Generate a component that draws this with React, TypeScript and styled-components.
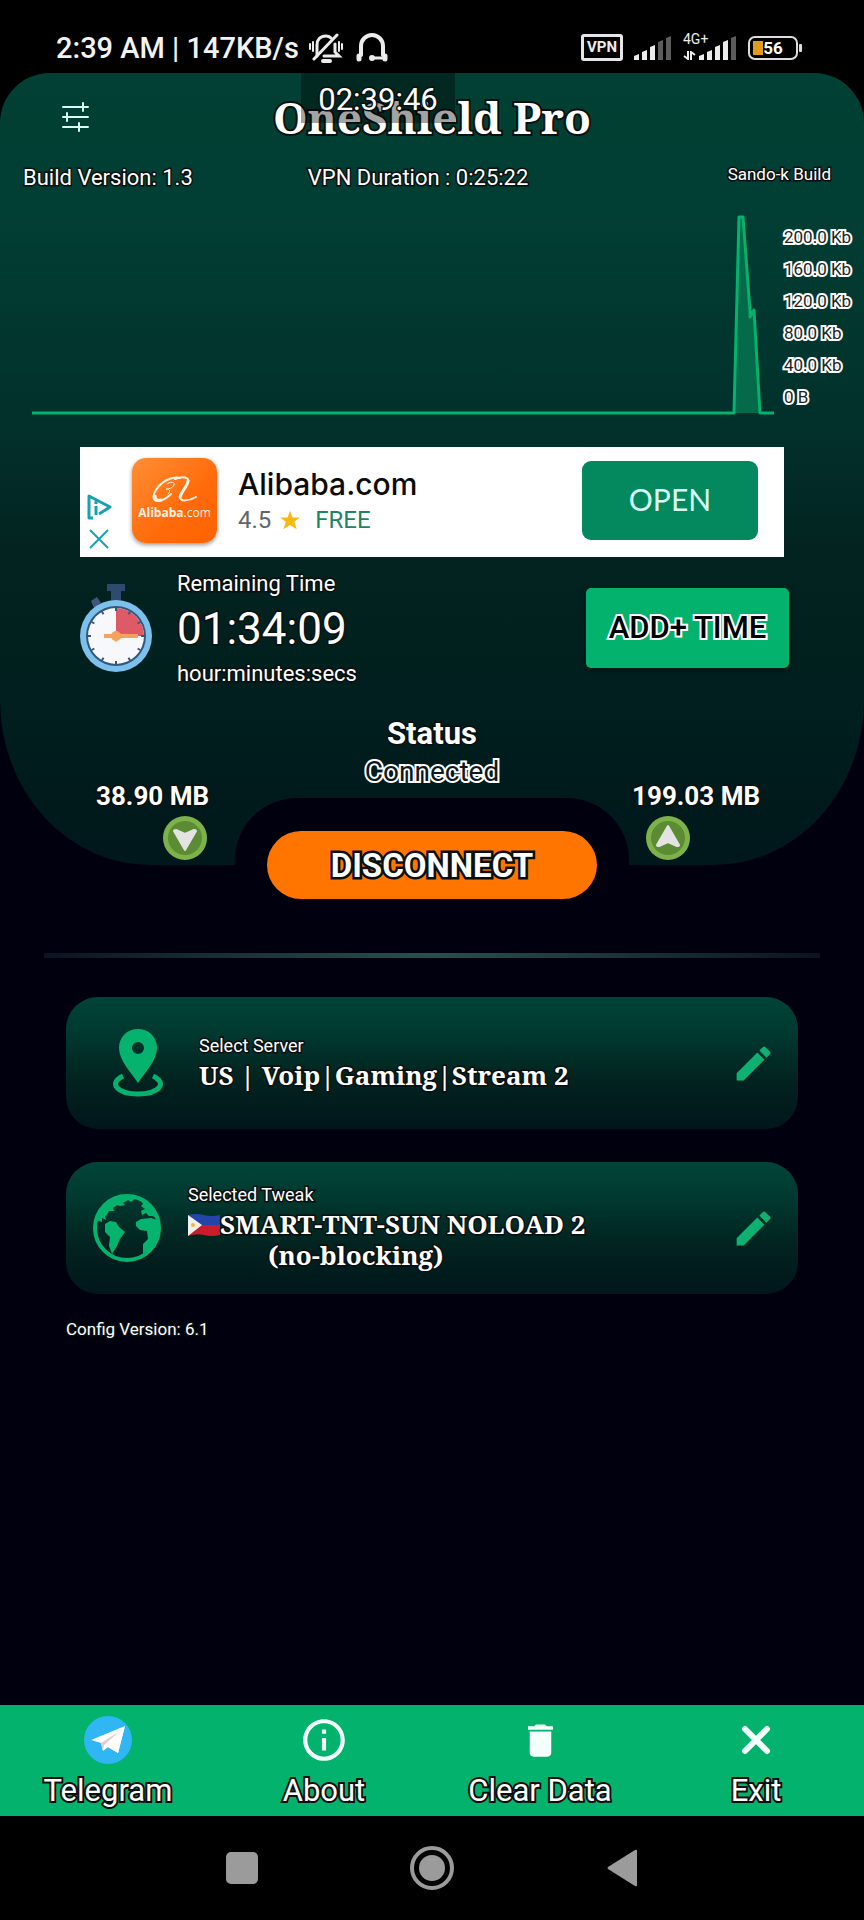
import React from 'react';
import styled, { createGlobalStyle, css } from 'styled-components';
import { MdDelete, MdEdit, MdInfoOutline } from 'react-icons/md';

const color = {
  page: '#00000f',
  accent: '#03b26d',
  deep: '#014034',
  night: '#00171b',
  orange: '#ff7500',
  system: '#9b9b9b',
};

const GlobalStyle = createGlobalStyle`
  * { box-sizing: border-box; }
  body { margin: 0; background: ${color.page}; font-family: Roboto, "Liberation Sans", sans-serif; color: #fff; }
  button { font-family: inherit; border: 0; padding: 0; background: none; color: inherit; cursor: pointer; }
  a { color: inherit; text-decoration: none; }
  h1, p, ul { margin: 0; padding: 0; }
  svg { display: block; flex: none; }
`;

const darkOutline = css`
  -webkit-text-stroke: 3px #0a0f0f;
  paint-order: stroke fill;
`;

const lightOutline = css`
  -webkit-text-stroke: 4px #fff;
  paint-order: stroke fill;
`;

const serif = css`
  font-family: "Noto Serif", "DejaVu Serif Condensed", "DejaVu Serif", serif;
  font-weight: 700;
`;

const Page = styled.div`
  display: flex;
  flex-direction: column;
  min-height: 100vh;
  background: ${color.page};
`;

/* ---------- status bar ---------- */

const StatusBar = styled.div`
  display: flex;
  align-items: center;
  height: 73px;
  padding: 22px 66px 0 56px;
  background: #000;
`;

const StatusText = styled.span`
  font-size: 29px;
  font-weight: 500;
  line-height: 34px;
  color: #f2f2f2;
  white-space: nowrap;
`;

const StatusGroup = styled.div<{ $end?: boolean; $gap: number }>`
  display: flex;
  align-items: center;
  gap: ${(p) => p.$gap}px;
  margin-left: ${(p) => (p.$end ? 'auto' : '9px')};
`;

/* ---------- top panel ---------- */

const PanelTop = styled.div`
  background: linear-gradient(180deg, #000 0, #000 60px, ${color.page} 60px);
`;

const Panel = styled.section`
  position: relative;
  background: linear-gradient(180deg, ${color.deep} 0%, #013e33 18%, #02302b 45%, #02231f 62%, #001f1e 80%, ${color.night} 100%);
  border-radius: 50px 50px 150px 150px / 50px 50px 165px 165px;
`;

const FloatingClock = styled.time`
  position: absolute;
  top: 0;
  left: 301px;
  width: 154px;
  height: 50px;
  text-align: center;
  background: rgba(0, 0, 0, 0.36);
  font-size: 31px;
  line-height: 54px;
  ${darkOutline}
`;

const TitleRow = styled.header`
  display: grid;
  grid-template-columns: 1fr auto 1fr;
  align-items: center;
  height: 88px;
  padding: 0 60px;
`;

const Title = styled.h1`
  ${serif}
  ${darkOutline}
  -webkit-text-stroke-width: 4px;
  font-size: 44px;
  line-height: 60px;
  white-space: nowrap;
`;

const IconButton = styled.button`
  display: flex;
  justify-self: start;
`;

const InfoRow = styled.div`
  display: flex;
  align-items: flex-start;
  height: 58px;
  padding: 3px 33px 0 23px;
`;

const Body = styled.p<{ $after?: boolean }>`
  ${darkOutline}
  font-size: 22px;
  line-height: 28px;
  white-space: nowrap;
  margin-left: ${(p) => (p.$after ? '115px' : '0')};
`;

const Small = styled.p<{ $end?: boolean }>`
  ${darkOutline}
  font-size: 17px;
  line-height: 20px;
  white-space: nowrap;
  margin-left: ${(p) => (p.$end ? 'auto' : '0')};
`;

const ChartRow = styled.div`
  display: flex;
  gap: 10px;
  padding: 2px 0 0 32px;
`;

const Chart = styled.svg`
  flex: 1 1 0;
  min-width: 0;
  height: 198px;
  overflow: visible;
`;

const Scale = styled.ul`
  width: 80px;
  list-style: none;
`;

const ScaleItem = styled.li`
  ${lightOutline}
  color: #1c2423;
  font-size: 17px;
  line-height: 32px;
  white-space: nowrap;
`;

/* ---------- ad ---------- */

const Ad = styled.aside`
  display: flex;
  align-items: center;
  height: 110px;
  margin: 28px 80px 0;
  padding-right: 26px;
  background: #fff;
`;

const AdMarks = styled.div`
  display: flex;
  flex-direction: column;
  align-self: flex-end;
  align-items: center;
  gap: 9px;
  width: 38px;
  padding-bottom: 8px;
  margin-right: 14px;
`;

const AdLogo = styled.div`
  display: flex;
  flex-direction: column;
  align-items: center;
  width: 85px;
  height: 85px;
  padding-top: 18px;
  margin: 0 21px 4px 0;
  border-radius: 14px;
  background: linear-gradient(135deg, #ff8f35, #ff6a0a 60%, #ff6200);
  box-shadow: 0 2px 4px rgba(0, 0, 0, 0.4);
  color: #fff3e4;
  font: 400 12px/18px "Open Sans", sans-serif;
`;

const AdText = styled.div`
  flex: 1;
  min-width: 0;
`;

const AdTitle = styled.p`
  color: #0b0b0b;
  font: 500 30px/36px Inter, Roboto, sans-serif;
`;

const AdMeta = styled.p`
  display: flex;
  align-items: center;
  gap: 9px;
  color: #636669;
  font-size: 24px;
  line-height: 36px;
`;

const Free = styled.span`
  margin-left: 6px;
  color: #1d855f;
`;

const OpenButton = styled.button`
  width: 176px;
  height: 79px;
  margin-bottom: 3px;
  padding-bottom: 4px;
  border-radius: 9px;
  background: #04895f;
  color: #d9fff4;
  font: 400 30px/36px Lato, sans-serif;
`;

/* ---------- remaining time ---------- */

const TimeRow = styled.div`
  display: flex;
  align-items: center;
  height: 141px;
  padding: 0 75px 0 80px;
`;

const TimeText = styled.div`
  flex: 1;
  padding: 3px 0 0 25px;
`;

const TimeValue = styled.p`
  ${darkOutline}
  font-size: 44px;
  line-height: 62px;
`;

const AddTime = styled.button`
  width: 203px;
  height: 80px;
  border-radius: 5px;
  background: ${color.accent};
  box-shadow: 0 2px 6px rgba(0, 0, 0, 0.4);
`;

const AddTimeText = styled.span`
  ${lightOutline}
  color: #000;
  font-size: 31px;
  font-weight: 500;
`;

/* ---------- connection ---------- */

const Connection = styled.div`
  display: grid;
  grid-template-columns: 1fr auto 1fr;
  align-items: end;
  height: 167px;
  padding: 0 96px;
`;

const Traffic = styled.div<{ $right?: boolean }>`
  display: flex;
  flex-direction: column;
  gap: 4px;
  justify-self: ${(p) => (p.$right ? 'end' : 'start')};
  align-items: ${(p) => (p.$right ? 'flex-start' : 'flex-end')};
  padding: 0 ${(p) => (p.$right ? '8px' : '0')} 5px 0;
`;

const TrafficValue = styled.span`
  ${darkOutline}
  font-size: 26px;
  font-weight: 700;
  line-height: 32px;
`;

const TrafficIcon = styled.svg<{ $right?: boolean }>`
  margin: ${(p) => (p.$right ? '0 0 0 14px' : '0 2px 0 0')};
`;

const State = styled.div`
  align-self: start;
  text-align: center;
  padding-top: 16px;
`;

const StateTitle = styled.p`
  ${darkOutline}
  font-size: 31px;
  font-weight: 700;
  line-height: 40px;
`;

const StateValue = styled.p`
  ${lightOutline}
  color: #10181f;
  font-size: 28px;
  line-height: 36px;
`;

const Notch = styled.div`
  position: relative;
  align-self: center;
  width: 394px;
  margin-top: -67px;
  padding: 33px 32px 0;
  border-radius: 62px 62px 0 0;
  background: ${color.page};
`;

const Disconnect = styled.button`
  width: 100%;
  height: 68px;
  border-radius: 34px;
  background: ${color.orange};
`;

const DisconnectText = styled.span`
  ${darkOutline}
  -webkit-text-stroke-width: 5px;
  font-size: 33px;
  font-weight: 700;
`;

const Divider = styled.hr`
  align-self: stretch;
  height: 5px;
  margin: 54px 44px 39px;
  border: 0;
  background: linear-gradient(90deg, #0b1420, #27514c 50%, #0b1420);
`;

/* ---------- selection cards ---------- */

const Main = styled.main`
  display: flex;
  flex: 1;
  flex-direction: column;
  gap: 33px;
  padding: 0 66px;
`;

const Card = styled.section<{ $left: number; $gap: number }>`
  display: flex;
  align-items: center;
  gap: ${(p) => p.$gap}px;
  height: 132px;
  padding: 0 22px 0 ${(p) => p.$left}px;
  border-radius: 32px;
  background: linear-gradient(180deg, #024437 0%, #003a30 25%, #02221f 65%, #00161b 100%);
`;

const CardText = styled.div`
  display: flex;
  flex: 1;
  flex-direction: column;
  min-width: 0;
  padding-bottom: 2px;
`;

const CardLabel = styled(Small)`
  margin-bottom: 2px;
  font-size: 18px;
  line-height: 24px;
`;

const CardValue = styled.p`
  ${serif}
  ${darkOutline}
  display: flex;
  align-items: center;
  font-size: 26px;
  line-height: 31px;
  white-space: nowrap;
`;

const CardNote = styled(CardValue)`
  padding-left: 80px;
`;

const EditButton = styled.button`
  display: flex;
  color: #0fb173;
`;

const Config = styled.div`
  margin-top: -8px;
`;

/* ---------- bottom bars ---------- */

const BottomNav = styled.nav`
  display: grid;
  grid-template-columns: repeat(4, 1fr);
  height: 111px;
  background: ${color.accent};
`;

const NavItem = styled.a`
  display: flex;
  flex-direction: column;
  align-items: center;
  gap: 8px;
  padding-top: 10px;
`;

const NavIcon = styled.span`
  display: flex;
  align-items: center;
  justify-content: center;
  height: 50px;
  color: #f2fffa;
`;

const NavLabel = styled.span`
  ${darkOutline}
  -webkit-text-stroke-width: 4px;
  font-size: 31px;
  line-height: 36px;
`;

const SystemNav = styled.nav`
  display: flex;
  align-items: center;
  justify-content: center;
  gap: 146px;
  height: 104px;
  background: #000;
`;

const SystemButton = styled.button`
  display: flex;
  justify-content: center;
  width: 44px;
`;

/* ---------- drawings ---------- */

const MutedBell = () => (
  <svg width="36" height="30" viewBox="0 0 36 30" fill="none" stroke="#ececec" strokeWidth="3" strokeLinecap="round">
    <path d="M9 23V12C9 7 12 3 18 3c2 0 4 1 5 2M27 11v8l4 4H16" />
    <path d="M6 26L29 2" />
    <path d="M15 28h7" strokeWidth="4" />
    <path d="M2 11v5M5 9v9M31 9v9M34 11v5" strokeWidth="2" />
  </svg>
);

const Headset = () => (
  <svg width="32" height="30" viewBox="0 0 32 30" fill="none" stroke="#ececec" strokeWidth="4" strokeLinecap="round">
    <path d="M5 22V13a11 11 0 0 1 22 0v9" />
    <path d="M3 23v3M29 23v3" strokeWidth="5" />
    <path d="M16 25h11" strokeWidth="3" />
    <circle cx="16" cy="25" r="3" fill="#ececec" stroke="none" />
  </svg>
);

const VpnBadge = styled.span`
  width: 42px;
  height: 27px;
  border: 3px solid #e6e6e6;
  border-radius: 3px;
  color: #ececec;
  font-size: 15px;
  font-weight: 700;
  line-height: 21px;
  text-align: center;
`;

const Signal = ({ strong }: { strong: number }) => (
  <svg width="38" height="24" viewBox="0 0 38 24">
    {[4, 8, 13, 18, 22].map((h, i) => (
      <path key={h} d={`M${i * 8} 24v${-h}l5 -2v${h + 2}z`} fill={i < strong ? '#ececec' : '#5c5c5c'} />
    ))}
  </svg>
);

const Mobile = styled.span`
  position: relative;
  display: flex;
  align-items: flex-end;
  gap: 3px;
`;

const MobileLabel = styled.span`
  position: absolute;
  top: -4px;
  left: 0;
  color: #ececec;
  font-size: 14px;
  line-height: 14px;
`;

const Battery = styled.span`
  position: relative;
  width: 50px;
  height: 24px;
  border: 2px solid #dedede;
  border-radius: 7px;
  background: linear-gradient(90deg, #e09a20 10px, transparent 10px) 3px 3px / 40px 14px no-repeat;
  font-size: 17px;
  font-weight: 700;
  line-height: 21px;
  text-align: center;

  &::after {
    content: '';
    position: absolute;
    top: 6px;
    right: -6px;
    width: 3px;
    height: 8px;
    border-radius: 1px;
    background: #dedede;
  }
`;

const Sliders = () => (
  <svg width="30" height="30" viewBox="0 0 30 30" stroke="#d8fff2" strokeWidth="2" strokeLinecap="round">
    <path d="M3 5h25M3 15h25M3 25h25M23 1v8M7 11v8M19 21v8" />
  </svg>
);

const AdChoices = () => (
  <svg width="25" height="26" viewBox="0 0 25 26" fill="none" stroke="#18a0b4" strokeWidth="3" strokeLinejoin="round">
    <path d="M6 24H2V2l21 11L12 20" />
    <path d="M9 12v9M9 7v3" />
  </svg>
);

const AdClose = () => (
  <svg width="20" height="20" viewBox="0 0 20 20" stroke="#18a0b4" strokeWidth="2">
    <path d="M1 1l18 18M19 1L1 19" />
  </svg>
);

const AlibabaMark = () => (
  <svg width="48" height="28" viewBox="0 0 48 28" fill="none" stroke="#fff3e4" strokeLinecap="round" strokeLinejoin="round">
    <path d="M16 8c4-3 8-2 7 1s-5 4-8 4c4 0 5 2 2 5" strokeWidth="1" />
    <path d="M29 2C20 0 10 6 5 14 1 20 2 25 7 25c5 0 9-3 13-7" strokeWidth="2" />
    <path d="M4 20c0 4 3 5 6 4" strokeWidth="3" />
    <path d="M24 3c7-3 15-2 13 3-2 6-7 10-8 15 0 5 9 4 16 0" strokeWidth="2" />
    <path d="M37 5c-1 6-7 11-8 16" strokeWidth="3" />
  </svg>
);

const Star = () => (
  <svg width="20" height="20" viewBox="0 0 24 24" fill="#f6b914">
    <path d="M12 1l3 8 9 0-7 5 3 9-8-5-8 5 3-9-7-5 9 0z" />
  </svg>
);

const Stopwatch = () => (
  <svg width="72" height="88" viewBox="0 0 72 88">
    <path d="M27 0h18v7h-4v12H31V7h-4z" fill="#2c4b6e" />
    <path d="M11 17l6-4 4 6-7 5z" fill="#3c587a" />
    <circle cx="36" cy="52" r="36" fill="#7cc0ee" />
    <circle cx="36" cy="52" r="30" fill="#35577c" />
    <circle cx="36" cy="52" r="28" fill="#f6f8fb" />
    <path d="M36 52V24a28 28 0 0 1 28 28z" fill="#dd5a66" />
    {Array.from({ length: 12 }, (_, i) => (
      <path key={i} d="M36 24v3" stroke="#35577c" strokeWidth="2" transform={`rotate(${i * 30} 36 52)`} />
    ))}
    <path d="M24 50h8l4-3 5 3h17v4H41l-5 4-4-4h-8z" fill="#f6a25c" />
    <circle cx="36" cy="52" r="5" fill="#f6a25c" />
  </svg>
);

const ArrowBadge = ({ up }: { up?: boolean }) => (
  <TrafficIcon $right={up} width="44" height="44" viewBox="0 0 44 44">
    <circle cx="22" cy="22" r="22" fill="#7cb249" />
    <circle cx="22" cy="22" r="17" fill="#5b8c34" />
    <path
      d="M22 34L11 15q0-1 2-1l9 4 9-4q2 0 2 1z"
      fill="#e3e3e3"
      stroke="#e3e3e3"
      strokeWidth="2"
      strokeLinejoin="round"
      transform={up ? 'rotate(180 22 22)' : undefined}
    />
  </TrafficIcon>
);

const Pin = () => (
  <svg width="54" height="68" viewBox="0 0 54 68" fill="#06b36e">
    <path
      fillRule="evenodd"
      d="M26 0c11 0 19 8 19 19 0 13-13 25-19 35C20 44 7 32 7 19 7 8 15 0 26 0zm0 13a6 6 0 1 0 0 12 6 6 0 0 0 0-12z"
    />
    <path d="M11 47C-4 54 5 65 26 65s30-11 15-18" fill="none" stroke="#06b36e" strokeWidth="5" />
  </svg>
);

const Globe = () => (
  <svg width="68" height="68" viewBox="0 0 68 68" fill="#06b36e">
    <circle cx="34" cy="34" r="32" fill="none" stroke="#06b36e" strokeWidth="4" />
    <path d="M3 26L9 12 20 5 32 2 44 3 38 8 35 6 30 9 32 11 27 12 24 11 20 14 21 17 16 17 14 21 12 22 13 26 9 24 9 28z" />
    <path d="M12 30l5-3 6 1 3 5 6 5-5 7-3 7-5 8-3-8 1-9-5-5z" />
    <path d="M43 28l5-3 10-1 6 2 3 11-5 13-12 10V50l5-5-1-8-7-1-4-4z" />
    <path d="M46 4l4 6-2 2 4 3-4 2 1 4 4-2 3 3 4 0 5 4-5-14-10-8z" />
  </svg>
);

const Flag = () => (
  <svg width="32" height="22" viewBox="0 0 32 22">
    <path d="M0 1q8-2 16 0t16 0v10H0z" fill="#2344a8" />
    <path d="M0 11h32v10q-8 2-16 0T0 22z" fill="#cb1c2c" />
    <path d="M0 1l14 10L0 22z" fill="#f4f1ea" />
    <circle cx="5" cy="11" r="2" fill="#eeb93c" />
  </svg>
);

const TelegramLogo = () => (
  <svg width="48" height="48" viewBox="0 0 48 48">
    <circle cx="24" cy="24" r="24" fill="#2fb6f3" />
    <path d="M7 24L41 10 34 37 24 31 19 35 17 27z" fill="#fff" />
    <path d="M17 27L36 15 20 29 19 35z" fill="#e6c9cb" />
    <path d="M22 30L41 10 34 37z" fill="#fff" />
  </svg>
);

const Cross = () => (
  <svg width="30" height="30" viewBox="0 0 30 30" stroke="#f0fffa" strokeWidth="6" strokeLinecap="round">
    <path d="M4 4l22 22M26 4L4 26" />
  </svg>
);

const scale = ['200.0 Kb', '160.0 Kb', '120.0 Kb', '80.0 Kb', '40.0 Kb', '0 B'];

const navItems = [
  { label: 'Telegram', icon: <TelegramLogo /> },
  { label: 'About', icon: <MdInfoOutline size={50} /> },
  { label: 'Clear Data', icon: <MdDelete size={43} /> },
  { label: 'Exit', icon: <Cross /> },
];

export default function App() {
  return (
    <Page>
      <GlobalStyle />
      <StatusBar>
        <StatusText>2:39 AM | 147KB/s</StatusText>
        <StatusGroup $gap={12}>
          <MutedBell />
          <Headset />
        </StatusGroup>
        <StatusGroup $end $gap={11}>
          <VpnBadge>VPN</VpnBadge>
          <Signal strong={3} />
          <Mobile>
            <MobileLabel>4G+</MobileLabel>
            <svg width="13" height="9" viewBox="0 0 13 9" stroke="#ececec" strokeWidth="2" fill="none">
              <path d="M5 0v8L1 5M8 9V1l4 3" />
            </svg>
            <Signal strong={4} />
          </Mobile>
          <Battery>56</Battery>
        </StatusGroup>
      </StatusBar>

      <PanelTop>
        <Panel>
          <TitleRow>
            <IconButton aria-label="Settings">
              <Sliders />
            </IconButton>
            <Title>OneShield Pro</Title>
          </TitleRow>
          <FloatingClock>02:39:46</FloatingClock>
          <InfoRow>
            <Body>Build Version: 1.3</Body>
            <Body $after>VPN Duration : 0:25:22</Body>
            <Small $end>Sando-k Build</Small>
          </InfoRow>

          <ChartRow>
            <Chart viewBox="0 0 742 198" preserveAspectRatio="none" role="img" aria-label="Traffic">
              <path d="M702 192L707 -4h4l7 100 4-7 6 103z" fill="#056a49" />
              <path
                d="M0 192H702L707 -4h4l7 94 0 6 4-7 6 103H742"
                fill="none"
                stroke={color.accent}
                strokeWidth="3"
                strokeLinejoin="round"
              />
            </Chart>
            <Scale>
              {scale.map((s) => (
                <ScaleItem key={s}>{s}</ScaleItem>
              ))}
            </Scale>
          </ChartRow>

          <Ad>
            <AdMarks>
              <AdChoices />
              <AdClose />
            </AdMarks>
            <AdLogo>
              <AlibabaMark />
              <span>
                <b>Alibaba</b>.com
              </span>
            </AdLogo>
            <AdText>
              <AdTitle>Alibaba.com</AdTitle>
              <AdMeta>
                4.5 <Star /> <Free>FREE</Free>
              </AdMeta>
            </AdText>
            <OpenButton>OPEN</OpenButton>
          </Ad>

          <TimeRow>
            <Stopwatch />
            <TimeText>
              <Body>Remaining Time</Body>
              <TimeValue>01:34:09</TimeValue>
              <Body>hour:minutes:secs</Body>
            </TimeText>
            <AddTime>
              <AddTimeText>ADD+ TIME</AddTimeText>
            </AddTime>
          </TimeRow>

          <Connection>
            <Traffic>
              <TrafficValue>38.90 MB</TrafficValue>
              <ArrowBadge />
            </Traffic>
            <State>
              <StateTitle>Status</StateTitle>
              <StateValue>Connected</StateValue>
            </State>
            <Traffic $right>
              <TrafficValue>199.03 MB</TrafficValue>
              <ArrowBadge up />
            </Traffic>
          </Connection>
        </Panel>
      </PanelTop>

      <Notch>
        <Disconnect>
          <DisconnectText>DISCONNECT</DisconnectText>
        </Disconnect>
      </Notch>
      <Divider />

      <Main>
        <Card $left={46} $gap={33}>
          <Pin />
          <CardText>
            <CardLabel>Select Server</CardLabel>
            <CardValue>US | Voip|Gaming|Stream 2</CardValue>
          </CardText>
          <EditButton aria-label="Edit server">
            <MdEdit size={45} />
          </EditButton>
        </Card>
        <Card $left={27} $gap={27}>
          <Globe />
          <CardText>
            <CardLabel>Selected Tweak</CardLabel>
            <CardValue>
              <Flag />
              SMART-TNT-SUN NOLOAD 2
            </CardValue>
            <CardNote>(no-blocking)</CardNote>
          </CardText>
          <EditButton aria-label="Edit tweak">
            <MdEdit size={45} />
          </EditButton>
        </Card>
        <Config>
          <Small>Config Version: 6.1</Small>
        </Config>
      </Main>

      <BottomNav>
        {navItems.map((item) => (
          <NavItem key={item.label} href="#">
            <NavIcon>{item.icon}</NavIcon>
            <NavLabel>{item.label}</NavLabel>
          </NavItem>
        ))}
      </BottomNav>

      <SystemNav>
        <SystemButton aria-label="Recent apps">
          <svg width="32" height="32" viewBox="0 0 32 32" fill={color.system}>
            <rect width="32" height="32" rx="5" />
          </svg>
        </SystemButton>
        <SystemButton aria-label="Home">
          <svg width="44" height="44" viewBox="0 0 44 44" fill={color.system}>
            <circle cx="22" cy="22" r="20" fill="none" stroke={color.system} strokeWidth="4" />
            <circle cx="22" cy="22" r="13" />
          </svg>
        </SystemButton>
        <SystemButton aria-label="Back">
          <svg width="30" height="38" viewBox="0 0 30 38" fill={color.system}>
            <path d="M28 1q2-1 2 1v34q0 2-2 1L1 20q-1-1 0-2z" />
          </svg>
        </SystemButton>
      </SystemNav>
    </Page>
  );
}
